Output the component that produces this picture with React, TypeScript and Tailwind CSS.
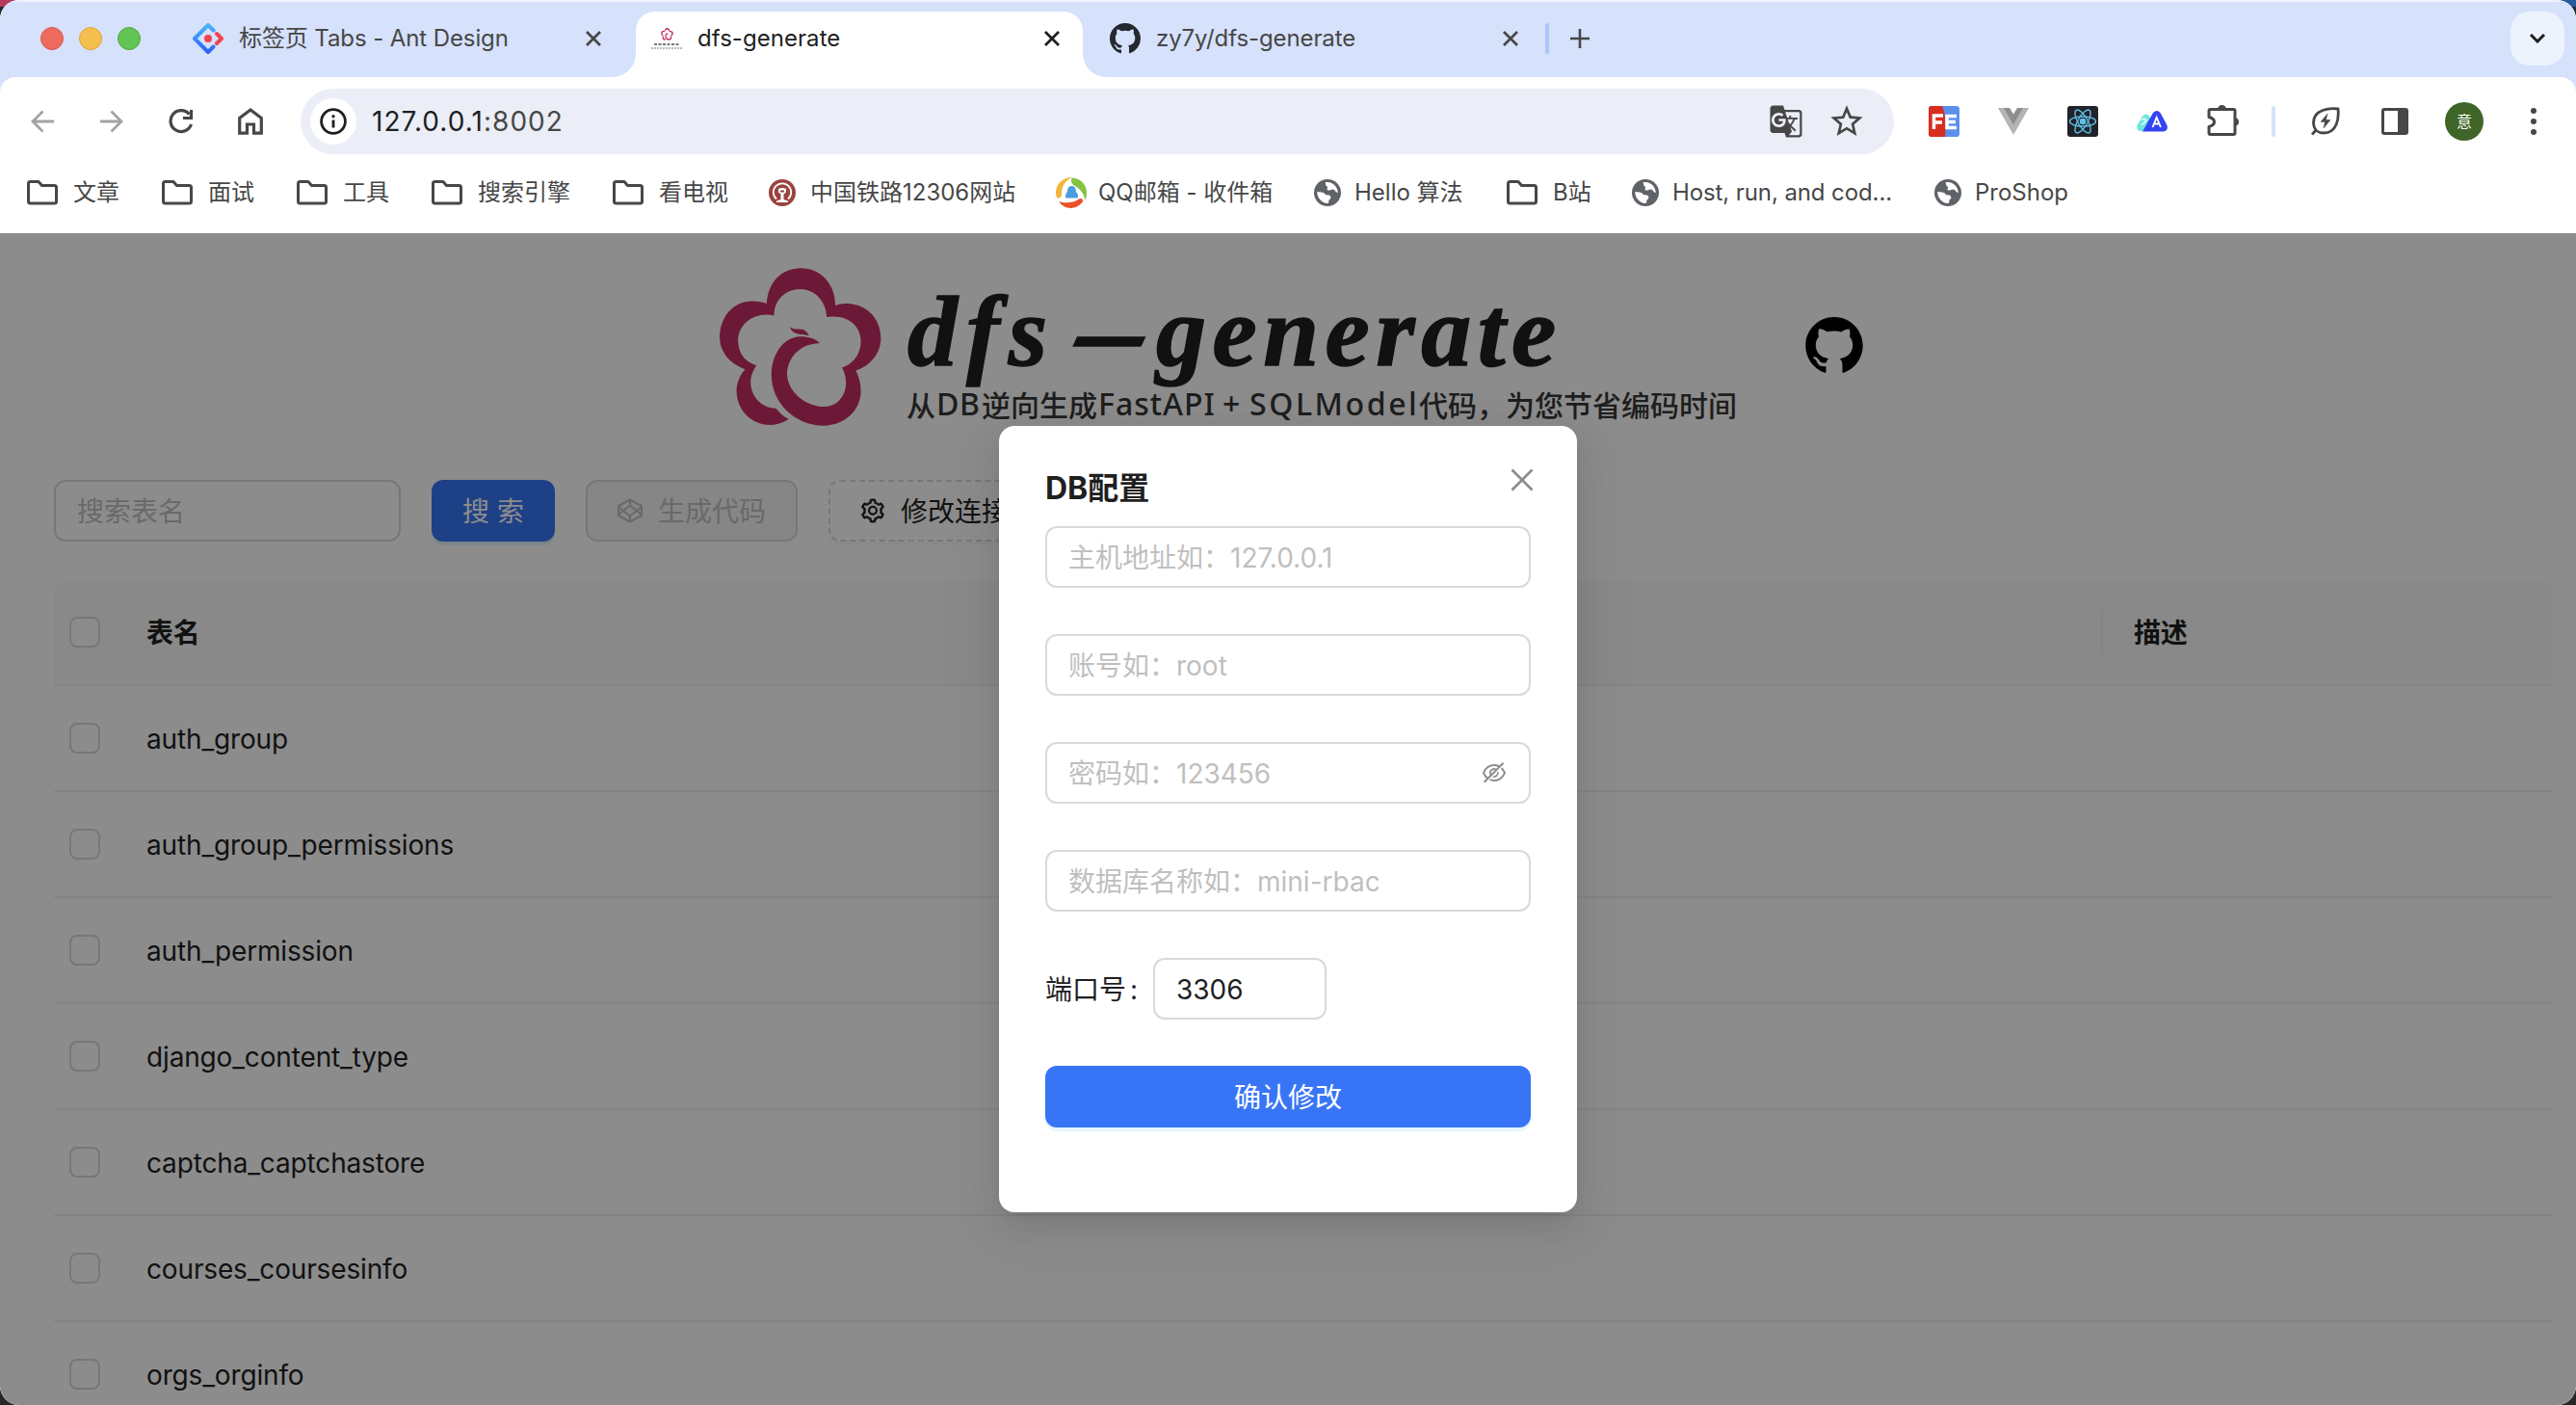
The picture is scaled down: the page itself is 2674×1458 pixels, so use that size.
import React from "react";
import {
  AiFillGithub,
  AiOutlineClose,
  AiOutlineEyeInvisible,
  AiOutlineSetting,
} from "react-icons/ai";
import { MdGTranslate, MdOutlineStarBorder } from "react-icons/md";

const CloseX = ({ className }: { className: string }) => (
  <svg viewBox="0 0 16 16" className={`size-4 shrink-0 ${className}`} fill="none" stroke="currentColor" strokeWidth="2.8">
    <path d="M1 1l14 14M15 1L1 15" />
  </svg>
);

const PLUM =
  "M235 194C238 125 275 84 322 84C370 84 410 130 410 200C420 195 430 194 440 194C490 196 526 240 526 303C525 350 498 388 462 402C470 420 475 445 475 465C475 525 435 573 380 573C305 572 247 500 247 415C247 348 280 297 320 296C342 296 362 303 370 317C325 316 287 358 287 415C290 470 335 514 382 514C415 514 437 480 437 440C437 422 433 406 427 393C456 382 475 350 475 310C474 262 440 226 388 236C386 185 357 149 320 149C282 149 253 185 254 231C205 218 162 255 162 310C162 348 180 376 209 386C198 405 194 422 194 440C195 485 225 520 258 519C268 533 278 545 291 553C275 565 258 571 242 571C195 571 158 523 158 465C158 440 167 415 180 398C142 382 115 345 115 298C115 235 150 186 197 186C212 186 225 189 235 194Z";
const CREST = "M295 267C306 277 320 271 330 275C337 280 341 288 343 294C328 287 299 293 295 267Z";

const Plum = ({ className }: { className: string }) => (
  <svg viewBox="110 80 420 500" preserveAspectRatio="none" className={className} fill="#c52f66">
    <path d={PLUM} />
    <path d={CREST} />
  </svg>
);

const Octocat = ({ className }: { className: string }) => (
  <svg viewBox="0 0 16 16" className={className} fill="currentColor">
    <path d="M8 0C3.58 0 0 3.58 0 8c0 3.54 2.29 6.53 5.47 7.59.4.07.55-.17.55-.38 0-.19-.01-.82-.01-1.49-2.01.37-2.53-.49-2.69-.94-.09-.23-.48-.94-.82-1.13-.28-.15-.68-.52-.01-.53.63-.01 1.08.58 1.23.82.72 1.21 1.87.87 2.33.66.07-.52.28-.87.51-1.07-1.78-.2-3.64-.89-3.64-3.95 0-.87.31-1.59.82-2.15-.08-.2-.36-1.02.08-2.12 0 0 .67-.21 2.2.82.64-.18 1.32-.27 2-.27s1.36.09 2 .27c1.53-1.04 2.2-.82 2.2-.82.44 1.1.16 1.92.08 2.12.51.56.82 1.27.82 2.15 0 3.07-1.87 3.75-3.65 3.95.29.25.54.73.54 1.48 0 1.07-.01 1.93-.01 2.2 0 .21.15.46.55.38A8.01 8.01 0 0 0 16 8c0-4.42-3.58-8-8-8z" />
  </svg>
);

const AntLogo = () => (
  <svg viewBox="0 0 32 32" className="size-8 shrink-0" fill="none">
    <defs>
      <linearGradient id="ant" x1="0" y1="0" x2="0" y2="1">
        <stop offset="0" stopColor="#4cb4f8" />
        <stop offset="1" stopColor="#2a63f5" />
      </linearGradient>
    </defs>
    <path d="M21.5 7.5L16 2L2 16L16 30L21.5 24.5" stroke="url(#ant)" strokeWidth="4" strokeLinejoin="round" strokeLinecap="round" />
    <path d="M25 11l5 5l-5 5" stroke="#f0434f" strokeWidth="4" strokeLinejoin="round" strokeLinecap="round" />
    <circle cx="16" cy="16" r="4" fill="#ee4450" />
  </svg>
);

const DfsFavicon = () => (
  <span className="flex w-8 shrink-0 flex-col items-center">
    <Plum className="h-[13px] w-[13px]" />
    <svg viewBox="0 0 32 8" className="mt-0.5 h-2 w-8" stroke="#777" fill="none">
      <path d="M3 2h26" strokeWidth="2" strokeDasharray="3 1.5" />
      <path d="M0 6h32" strokeWidth="1" strokeDasharray="2 1" />
    </svg>
  </span>
);

const Folder = () => (
  <svg viewBox="0 0 32 26" className="h-[26px] w-8 shrink-0" fill="none" stroke="#474747" strokeWidth="3" strokeLinejoin="round">
    <path d="M1.5 3.5q0-2 2-2H12l3.5 4H28.500q2 0 2 2V22q0 2-2 2H3.500q-2 0-2-2z" />
  </svg>
);

const Globe = () => (
  <svg viewBox="0 0 28 28" className="size-7 shrink-0">
    <circle cx="14" cy="14" r="14" fill="#5f6368" />
    <path d="M11.500 3C12.500 5 11.500 6 13.500 7.500C15.500 8.500 12 10.500 14.500 11.500C17 12 18 10 20 10.500C22 11 22 13.500 24.800 14C24.500 8 20 3.200 14 3C13 3 12.500 3 11.500 3Z" fill="#fff" />
    <path d="M3.200 13C3.200 19.500 8 24.800 14 25C16 24.500 15 22.500 15.500 21.500C17 20.500 18 19.500 17 17.500C15.500 15.500 12.500 17 11.500 15.500C10.500 13.500 8 13.500 3.200 13Z" fill="#fff" />
  </svg>
);

const Rail = () => (
  <svg viewBox="0 0 28 28" className="size-7 shrink-0">
    <circle cx="14" cy="14" r="14" fill="#9a433f" />
    <path d="M8 20.500a9.200 9.200 0 1 1 12 0" fill="none" stroke="#fff" strokeWidth="1.800" />
    <path d="M10 10q4-2 8 0v3.500l-2.500 2V21l4.500 1.500v1.500H8v-1.500l4.500-1.500v-5.500l-2.500-2z" fill="#fff" />
    <path d="M12 11.500h4v2h-4z" fill="#9a433f" />
  </svg>
);

const QQMail = () => (
  <svg viewBox="0 0 32 32" className="size-8 shrink-0">
    <path d="M17 0C7 0 0 7 0 16c0 3 .5 5 2 5.500C5 22 6 20 6 17C6 9 10 3 17 0z" fill="#f2b63c" />
    <path d="M17 .5C25 1 32 7 32 16c0 3-.5 5-1.500 8C29.500 18 26 12.500 20 9c-4-2-5-6-3-8.500z" fill="#84c341" />
    <path d="M3 25c6 2 15 2 21-2.500c3-1.500 5 1 3.500 3.500C21 34 9 34 3 25z" fill="#ea5328" />
    <path d="M16.500 9c-3.500 0-4.500 3-4.500 6c-2 2-2.500 4-1.500 6.500h12c1-2.500.5-4.500-1.500-6.500c0-3-1-6-4.500-6z" fill="#4a9ce0" />
  </svg>
);

const HexGem = () => (
  <svg viewBox="0 0 28 28" className="size-7 shrink-0" fill="none" stroke="currentColor" strokeWidth="2" strokeLinejoin="round">
    <path d="M14 2.500L26 9v10L14 25.500L2 19V9z" />
    <path d="M14 8.500l7 5.500l-7 5.500L7 14z" />
    <path d="M14 2.500v6M14 19.500v6M2 10l5 4l-5 4M26 10l-5 4l5 4" />
  </svg>
);

const BOOKMARKS: { icon: React.ReactNode; label: string; box: string }[] = [
  { icon: <Folder />, label: "文章", box: "w-[140px] gap-4" },
  { icon: <Folder />, label: "面试", box: "w-[140px] gap-4" },
  { icon: <Folder />, label: "工具", box: "w-[140px] gap-4" },
  { icon: <Folder />, label: "搜索引擎", box: "w-[188px] gap-4" },
  { icon: <Folder />, label: "看电视", box: "w-[162px] gap-4" },
  { icon: <Rail />, label: "中国铁路12306网站", box: "w-[298px] gap-[15px]" },
  { icon: <QQMail />, label: "QQ邮箱 - 收件箱", box: "w-[268px] gap-3" },
  { icon: <Globe />, label: "Hello 算法", box: "w-[200px] gap-[14px]" },
  { icon: <Folder />, label: "B站", box: "w-[130px] gap-4" },
  { icon: <Globe />, label: "Host, run, and cod...", box: "w-[314px] gap-[14px] tracking-[-0.1px]" },
  { icon: <Globe />, label: "ProShop", box: "w-[200px] gap-[14px]" },
];

const TABLES = [
  "auth_group",
  "auth_group_permissions",
  "auth_permission",
  "django_content_type",
  "captcha_captchastore",
  "courses_coursesinfo",
  "orgs_orginfo",
];

function TabStrip() {
  return (
    <div className="flex h-20 items-start border-t-2 border-[#eef3fe] bg-[#d6e1fb] text-[24px] leading-none tracking-[-0.1px] text-[#474747]">
      <div className="flex h-[76px] w-[660px] items-center pl-[42px] pr-[36px]">
        <div className="flex gap-4">
          <span className="size-6 rounded-full border border-[#d9584c] bg-[#ed6a5e]" />
          <span className="size-6 rounded-full border border-[#dca33c] bg-[#f4bf4f]" />
          <span className="size-6 rounded-full border border-[#4fa73d] bg-[#61c454]" />
        </div>
        <div className="ml-[54px] flex w-[424px] items-center">
          <AntLogo />
          <span className="ml-4 grow whitespace-nowrap">标签页 Tabs - Ant Design</span>
          <CloseX className="mr-0" />
        </div>
      </div>
      <div className="relative mt-[10px] flex h-[68px] w-[464px] items-center rounded-t-[20px] bg-white pb-3 pl-4 pr-6 text-[#1f1f1f]">
        <span className="absolute -left-6 bottom-0 size-6 bg-[radial-gradient(circle_at_0_0,#d6e1fb_23.5px,#fff_24px)]" />
        <span className="absolute -right-6 bottom-0 size-6 bg-[radial-gradient(circle_at_100%_0,#d6e1fb_23.5px,#fff_24px)]" />
        <DfsFavicon />
        <span className="ml-4 grow tracking-[0.05px]">dfs-generate</span>
        <CloseX className="" />
      </div>
      <div className="flex h-[76px] grow items-center pl-7">
        <Octocat className="size-8 shrink-0 text-[#24292f]" />
        <span className="ml-4 w-[360px]">zy7y/dfs-generate</span>
        <CloseX className="" />
        <span className="ml-[28px] h-8 w-1 rounded bg-[#a8c7fa]" />
        <svg viewBox="0 0 20 20" className="ml-[22px] size-5" stroke="currentColor" strokeWidth="2.6">
          <path d="M10 0v20M0 10h20" />
        </svg>
        <span className="ml-auto mr-3 flex h-14 w-14 items-center justify-center rounded-[20px] bg-[#ecf3fd] text-[#1f1f1f]">
          <svg viewBox="0 0 16 10" className="h-[10px] w-4" fill="none" stroke="currentColor" strokeWidth="3">
            <path d="M1 1l7 7l7-7" />
          </svg>
        </span>
      </div>
    </div>
  );
}

function AddressBar() {
  return (
    <div className="flex h-[92px] items-center pl-8 text-[#474747]">
      <svg viewBox="0 0 24 24" className="size-6 text-[#a3a3a3]" fill="none" stroke="currentColor" strokeWidth="2.800">
        <path d="M24 12H2M12.500 1.500L2 12l10.500 10.500" />
      </svg>
      <svg viewBox="0 0 24 24" className="ml-[48px] size-6 text-[#a3a3a3]" fill="none" stroke="currentColor" strokeWidth="2.800">
        <path d="M0 12h22M11.500 1.500L22 12L11.500 22.500" />
      </svg>
      <svg viewBox="0 0 26 26" className="ml-[47px] size-[26px]" fill="none" stroke="currentColor" strokeWidth="3.2">
        <path d="M21.500 5.500A11 11 0 1 0 23.500 16M23.500 1v8.500H15" />
      </svg>
      <svg viewBox="0 0 26 28" className="ml-[46px] h-7 w-[26px]" fill="none" stroke="currentColor" strokeWidth="3.2">
        <path d="M1.700 10.500L13 2l11.300 8.500v15.700h-7.800V17h-7v9.200H1.700z" />
      </svg>
      <div className="ml-[39px] flex h-[68px] w-[1654px] items-center rounded-full bg-[#ebeef7] pl-[10px] pr-[29px]">
        <span className="flex size-12 items-center justify-center rounded-full bg-white text-[#1f1f1f]">
          <svg viewBox="0 0 28 28" className="size-7" fill="none" stroke="currentColor" strokeWidth="2.800">
            <circle cx="14" cy="14" r="12.400" />
            <path d="M14 12.500v8M14 7.300v3" />
          </svg>
        </span>
        <span className="ml-4 grow text-[28px] leading-none tracking-[1.05px] text-[#1f1f1f]">
          127.0.0.1<span className="text-[#474747]">:8002</span>
        </span>
        <MdGTranslate className="mr-[25px] size-9" />
        <MdOutlineStarBorder className="size-[40px]" />
      </div>
      <div className="ml-9 flex items-center">
        <svg viewBox="0 0 32 32" className="size-8">
          <rect width="32" height="32" rx="3" fill="#5b8fee" />
          <path d="M3 0h11c4 8 4 24 3 32H3q-3 0-3-3V3q0-3 3-3z" fill="#d92d20" />
          <path d="M5.500 24V10H15M5.500 17H14M29 10.500H19V22.500H29M19 16.500H28" fill="none" stroke="#fff" strokeWidth="3.500" />
        </svg>
        <svg viewBox="0 0 32 28" className="ml-10 h-7 w-8">
          <path d="M0 0h32L16 28z" fill="#b4b4b4" />
          <path d="M6 0h20L16 17.500z" fill="#8e8e8e" />
          <path d="M12 0h8l-4 6.500z" fill="#fff" />
        </svg>
        <svg viewBox="0 0 32 32" className="ml-10 size-8" fill="none" stroke="#61c2e8" strokeWidth="1.400">
          <rect width="32" height="32" rx="3" fill="#20232a" stroke="none" />
          <ellipse cx="16" cy="16" rx="13.500" ry="5" />
          <ellipse cx="16" cy="16" rx="13.500" ry="5" transform="rotate(60 16 16)" />
          <ellipse cx="16" cy="16" rx="13.500" ry="5" transform="rotate(120 16 16)" />
          <circle cx="16" cy="16" r="2.600" fill="#61c2e8" />
        </svg>
        <svg viewBox="0 0 32 22" className="ml-10 h-[22px] w-8">
          <path d="M6 5.500q4-4 7 0L20 21H5q-6 0-4.500-6z" fill="#6fe6dc" />
          <path d="M17 2q4-4 7.500 0L31.500 15q1.500 6-4 6.500H6z" fill="#3344f3" />
          <path d="M4.500 9h6M7.500 7v2M5 14.500q4-2 5-5.500" fill="none" stroke="#fff" strokeWidth="1.200" />
          <path d="M16.500 17l4.200-10l4.200 10M18 13.500h5.500" fill="none" stroke="#fff" strokeWidth="1.900" />
        </svg>
        <svg viewBox="0 0 34 34" className="-mt-1 ml-[41px] size-[34px]" fill="none" stroke="currentColor" strokeWidth="3" strokeLinejoin="round">
          <path d="M4 6.500H27.500q1.500 0 1.500 1.500V31q0 1.500-1.500 1.500H3.500q-1.500 0-1.500-1.500V24.500Q7.500 23 7.500 19.500Q7.500 16 2 14.500V8q0-1.500 1.500-1.500z" />
          <path d="M11 6.500a4.500 4.500 0 0 1 9 0zM29 15.500a4 4 0 0 1 0 8z" fill="currentColor" stroke="none" />
        </svg>
        <span className="ml-[33px] h-8 w-1 rounded bg-[#d3e3fd]" />
        <svg viewBox="0 0 30 30" className="ml-[37px] size-[30px]" fill="none" stroke="currentColor" strokeWidth="2.800">
          <path d="M28 2C20 1 2 2 2.500 17C3 24 8 27 13 27C27 27 29 12 28 2zM5.500 23.500L1 28.500" />
          <path d="M17 7l-7 8.500h4.500L13 22l7-8.500h-4.500z" fill="currentColor" strokeWidth="0.500" />
        </svg>
        <svg viewBox="0 0 28 30" className="ml-[43px] h-[30px] w-7">
          <rect x="1.500" y="2.500" width="25" height="25" rx="1.500" fill="none" stroke="currentColor" strokeWidth="3" />
          <path d="M17 2h10v26H17z" fill="currentColor" />
        </svg>
        <span className="ml-[38px] flex size-10 items-center justify-center rounded-full bg-[#3f6528] text-[16px] leading-none text-white">意</span>
        <svg viewBox="0 0 6 28" className="ml-[49px] h-7 w-[6px]" fill="currentColor">
          <circle cx="3" cy="3" r="3" />
          <circle cx="3" cy="14" r="3" />
          <circle cx="3" cy="25" r="3" />
        </svg>
      </div>
    </div>
  );
}

function BookmarkBar() {
  return (
    <div className="flex h-[68px] items-start pl-7 pt-3 text-[24px] leading-none text-[#474747]">
      {BOOKMARKS.map((b) => (
        <div key={b.label} className={`flex h-8 shrink-0 items-center whitespace-nowrap ${b.box}`}>
          {b.icon}
          <span>{b.label}</span>
        </div>
      ))}
    </div>
  );
}

const Checkbox = () => <span className="block size-8 rounded-lg border-2 border-[#d9d9d9] bg-white" />;

function PageHeader() {
  return (
    <div className="flex h-[258px] items-start pl-[745px]">
      <Plum className="mt-[37px] h-[167px] w-[171px] shrink-0" />
      <div className="ml-[26px] w-[862px] shrink-0 pt-[43px]">
        <div className="flex h-[122px] items-center whitespace-nowrap font-['Liberation_Serif',serif] text-[104px] font-bold italic leading-[122px] text-[#1f1f1f] [-webkit-text-stroke:1.5px_#1f1f1f]">
          <span className="w-[168px] tracking-[9px]">dfs</span>
          <span className="w-[90px] origin-left scale-x-[2.5]">-</span>
          <span className="tracking-[6.5px]">generate</span>
        </div>
        <div className="-mt-[8px] flex h-11 items-center whitespace-nowrap font-['Noto_Sans_CJK_SC',sans-serif] text-[30px] font-medium leading-[44px] text-[#383838]">
          <span className="-ml-[1px] w-[31px]">从</span>
          <span className="w-[47px] font-['Noto_Sans'] text-[32px] tracking-[0.5px]">DB</span>
          <span className="w-[121px]">逆向生成</span>
          <span className="w-[129px] font-['Noto_Sans'] text-[32px] tracking-[1px]">FastAPI</span>
          <span className="w-[28px] font-['Noto_Sans'] text-[32px]">+</span>
          <span className="w-[176px] font-['Noto_Sans'] text-[32px] tracking-[2.6px]">SQLModel</span>
          <span>代码，为您节省编码时间</span>
        </div>
      </div>
      <AiFillGithub className="ml-[66px] mt-[84px] size-[68px] shrink-0 text-black" />
    </div>
  );
}

function ActionBar() {
  return (
    <div className="flex h-16 gap-8 pl-14 text-[28px] leading-none">
      <div className="flex w-[360px] items-center rounded-xl border-2 border-[#d9d9d9] pl-[22px] pt-px text-[#bfbfbf]">搜索表名</div>
      <button className="flex w-32 items-center justify-center rounded-xl bg-[#3875f6] pt-px text-white shadow-[0_4px_0_rgba(5,145,255,0.1)]">
        <span>搜 索</span>
      </button>
      <button className="flex w-[220px] items-center rounded-xl border-2 border-[#d9d9d9] bg-[#f5f5f5] pl-[30px] text-[#bfbfbf]">
        <HexGem />
        <span className="ml-[15px] pt-px">生成代码</span>
      </button>
      <button className="flex w-[276px] items-center rounded-xl border-2 border-dashed border-[#d9d9d9] pl-[30px] text-[#1f1f1f] shadow-[0_4px_0_rgba(0,0,0,0.02)]">
        <AiOutlineSetting className="size-7 [stroke-width:16px] [stroke:currentColor]" />
        <span className="ml-[15px] pt-px">修改连接</span>
      </button>
    </div>
  );
}

function TableList() {
  return (
    <div className="ml-14 mt-10 w-[2594px] text-[28px] leading-none tracking-[-0.15px] text-[#1f1f1f]">
      <div className="flex h-[110px] items-center rounded-t-2xl border-b-2 border-[#f0f0f0] bg-[#fafafa] font-bold">
        <div className="flex w-16 justify-center"><Checkbox /></div>
        <div className="w-[2061px] pl-8 pt-0.5">表名</div>
        <div className="flex h-[46px] items-center border-l-2 border-[#f0f0f0] pl-8 pt-0.5">描述</div>
      </div>
      {TABLES.map((name) => (
        <div key={name} className="flex h-[110px] items-center border-b-2 border-[#f0f0f0]">
          <div className="flex w-16 justify-center"><Checkbox /></div>
          <div className="pl-8 pt-px">{name}</div>
        </div>
      ))}
    </div>
  );
}

const Field = ({ hint, children }: { hint: string; children?: React.ReactNode }) => (
  <div className="mb-12 flex h-16 items-center justify-between rounded-xl border-2 border-[#d9d9d9] pl-[22px] pr-[22px] text-[#bfbfbf]">
    <span className="pt-px">{hint}</span>
    {children}
  </div>
);

function ConfigModal() {
  return (
    <div className="absolute left-[1037px] top-[202px] h-[816px] w-[600px] rounded-2xl bg-white px-12 text-[28px] leading-none text-[#1f1f1f] shadow-[0_12px_32px_0_rgba(0,0,0,0.08),0_6px_12px_-8px_rgba(0,0,0,0.12),0_18px_56px_16px_rgba(0,0,0,0.05)]">
      <div className="flex h-[104px] items-center justify-between">
        <span className="pt-[26px] text-[32px] font-bold">DB配置</span>
        <AiOutlineClose className="-mr-[8px] mt-2 size-[34px] text-[#8c8c8c]" />
      </div>
      <Field hint="主机地址如：127.0.0.1" />
      <Field hint="账号如：root" />
      <Field hint="密码如：123456">
        <AiOutlineEyeInvisible className="size-7 text-[#8c8c8c]" />
      </Field>
      <Field hint="数据库名称如：mini-rbac" />
      <div className="mb-12 flex h-16 items-center">
        <span className="flex w-28 gap-1 whitespace-nowrap pt-px">
          端口号<span>:</span>
        </span>
        <div className="flex h-16 w-[180px] items-center rounded-xl border-2 border-[#d9d9d9] pl-[22px] pt-px">3306</div>
      </div>
      <button className="flex h-16 w-full items-center justify-center rounded-xl bg-[#3875f6] pt-px text-white shadow-[0_4px_0_rgba(5,145,255,0.1)]">
        确认修改
      </button>
    </div>
  );
}

export default function App() {
  return (
    <div className="h-[1458px] w-[2674px] overflow-hidden bg-[#26272b] bg-[linear-gradient(90deg,#b53b5c_50%,#2a5a9c_50%)] bg-[length:100%_7px] bg-no-repeat font-['Inter','Noto_Sans_CJK_SC',sans-serif]">
      <div className="flex h-full flex-col overflow-hidden rounded-[20px] bg-white">
        <TabStrip />
        <div className="h-[160px] bg-[#d6e1fb]">
          <div className="h-full rounded-t-2xl bg-white">
            <AddressBar />
            <BookmarkBar />
          </div>
        </div>
        <div className="relative grow overflow-hidden bg-white">
          <PageHeader />
          <ActionBar />
          <TableList />
          <div className="absolute inset-x-0 bottom-0 top-0.5 bg-black/45" />
          <ConfigModal />
        </div>
      </div>
    </div>
  );
}
